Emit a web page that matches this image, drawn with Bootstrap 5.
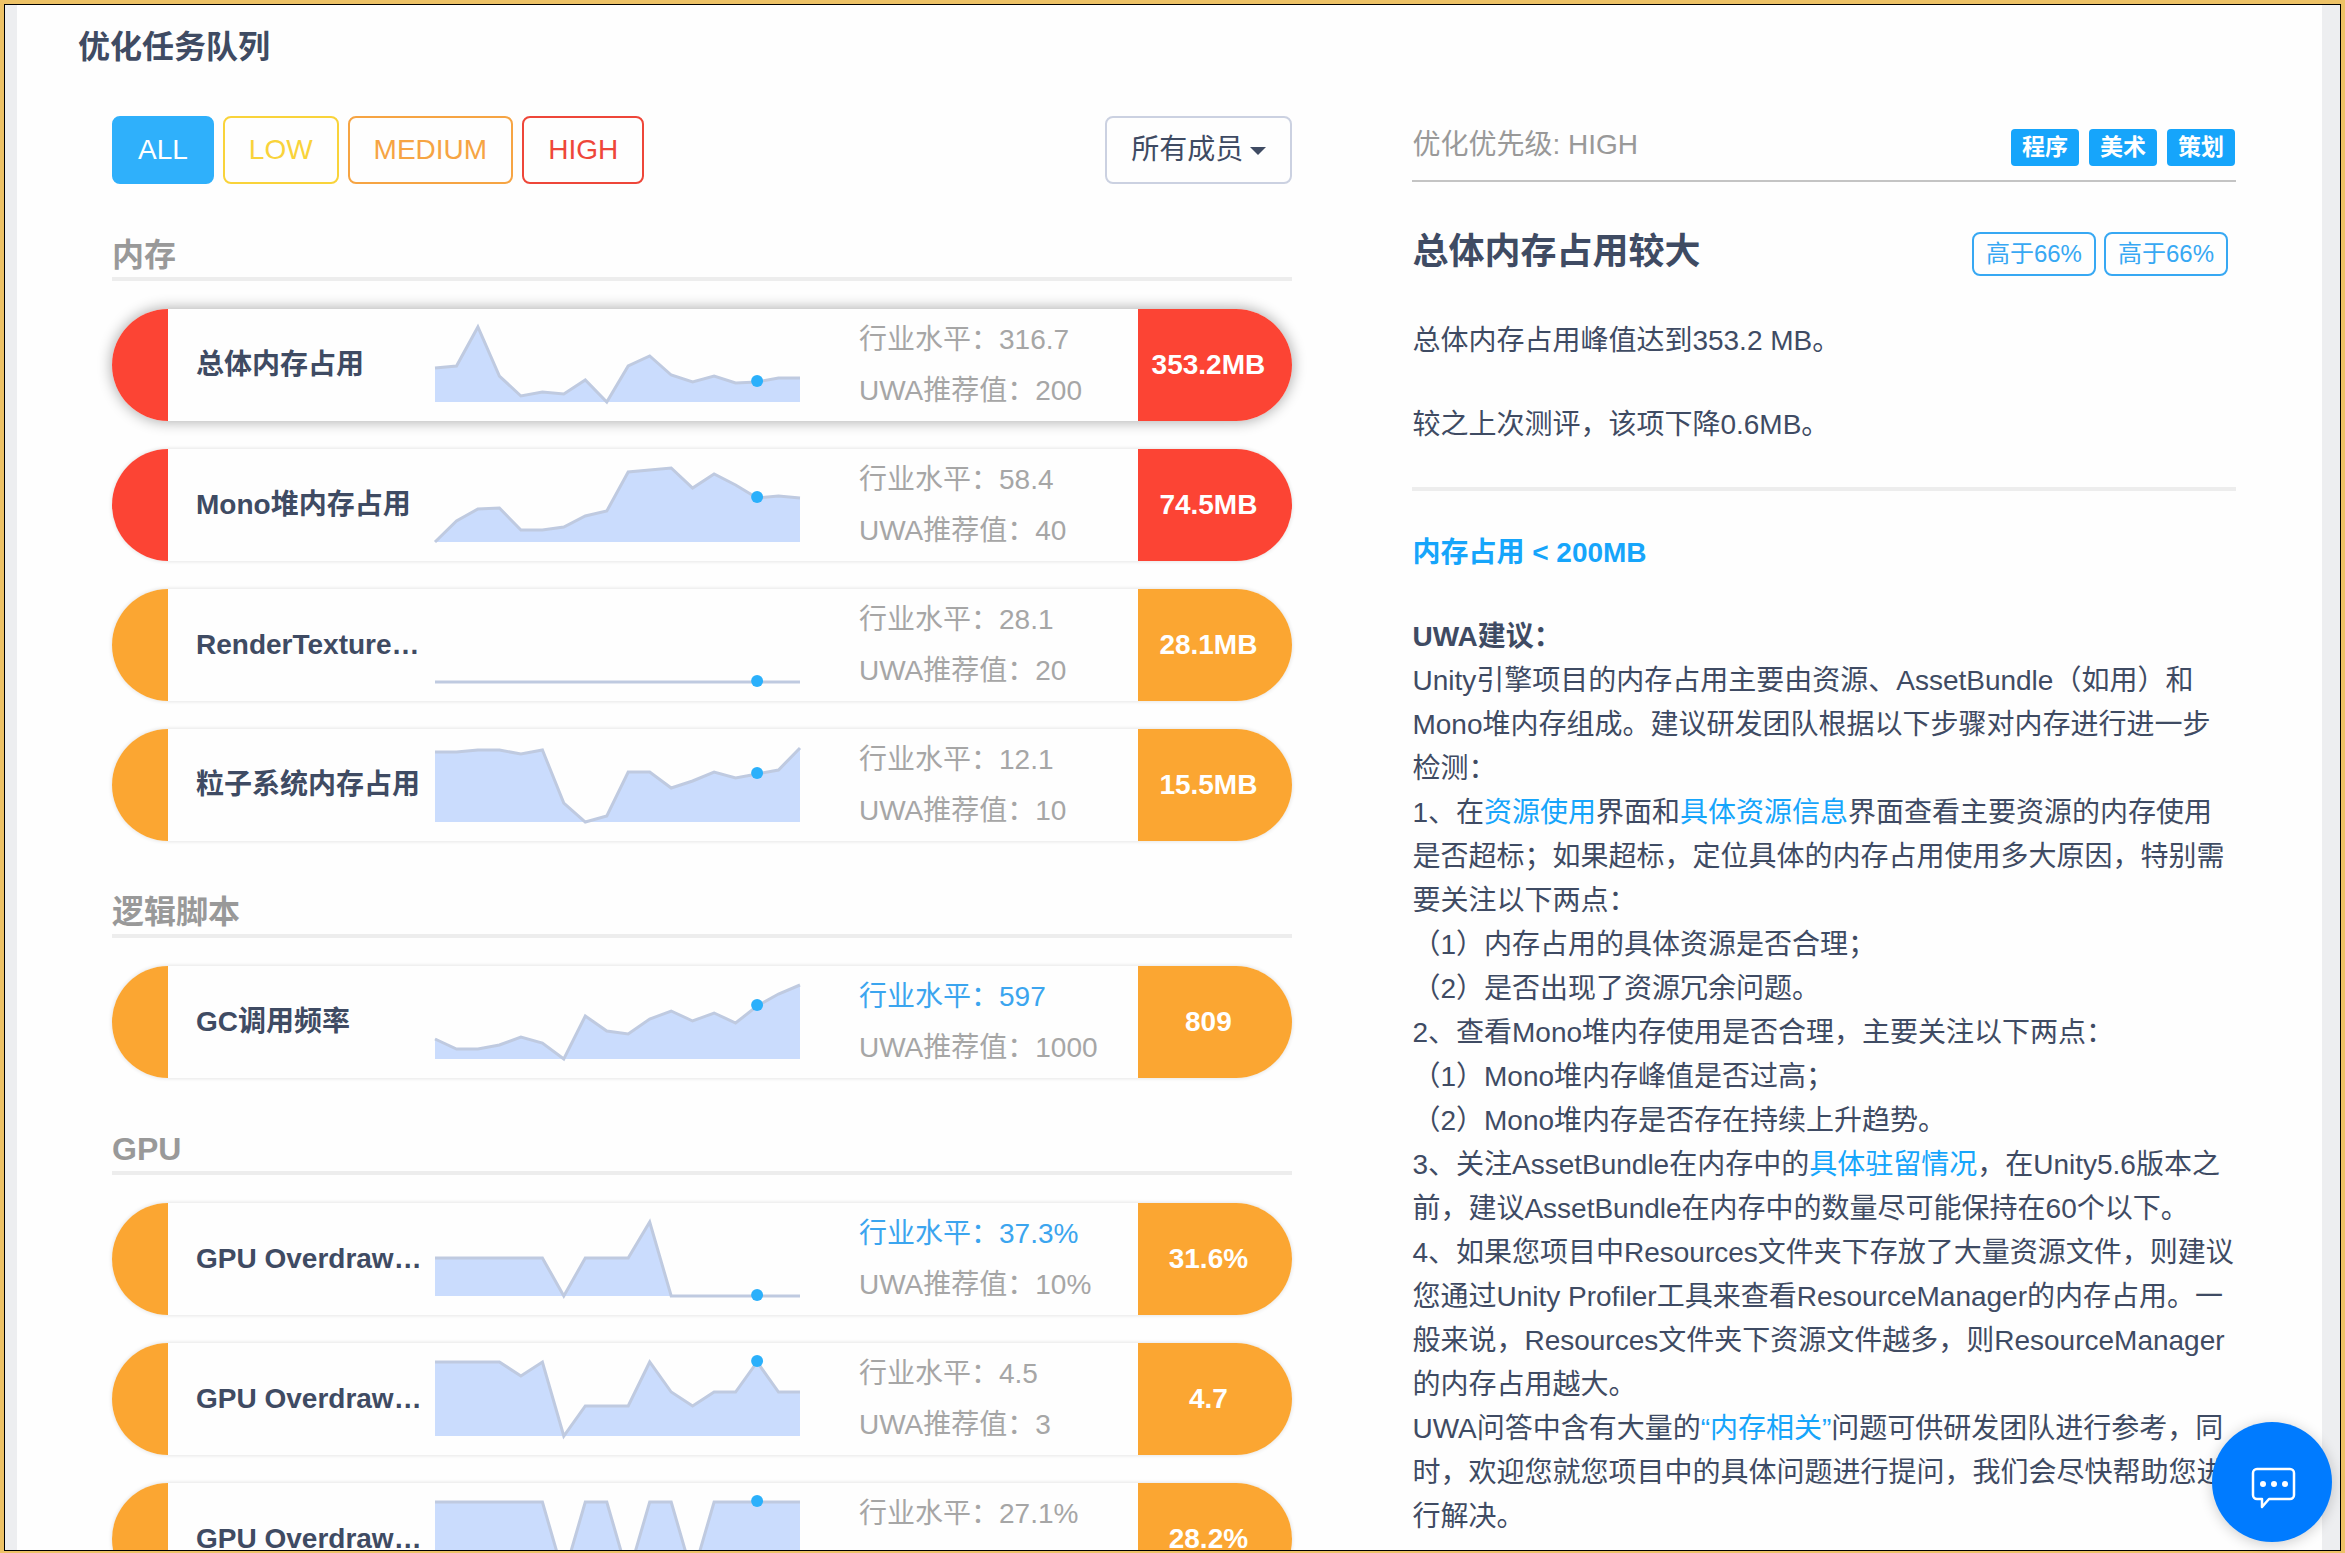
<!DOCTYPE html>
<html lang="zh-CN">
<head>
<meta charset="utf-8">
<meta name="viewport" content="width=device-width, initial-scale=1">
<title>优化任务队列</title>
<link href="https://cdn.jsdelivr.net/npm/bootstrap@5.3.0/dist/css/bootstrap.min.css" rel="stylesheet">
<style>
:root{--ink:#3f4b63;--blue:#16a5fb;--red:#fc4434;--orange:#fba632;--muted:#a6a6a6;--rule:#ededed}
body{font-family:"Liberation Sans","Noto Sans CJK SC",sans-serif;font-size:28px;line-height:44px;color:var(--ink);background:#edc266;text-spacing-trim:space-all}
a{color:var(--blue);text-decoration:none}
.frame{height:100vh;overflow:hidden;border:solid #edc266;border-width:4px 4px 2px}
.desk{height:100%;border:1px solid #000;background:#edeef0;padding:0 18px 0 12px;overflow:hidden}
.sheet{background:#fefefe;min-height:100%;padding:18px 86px 0 95px}
.page-title{font-size:32px;line-height:48px;font-weight:700;margin:0 0 45px -34px}
.columns{gap:120px}
.queue{flex:1181 1 0;min-width:0}
.detail{flex:824 1 0;min-width:0}
.btn-filter{--bs-btn-font-size:28px;--bs-btn-line-height:42px;--bs-btn-padding-x:24px;--bs-btn-padding-y:11px;--bs-btn-border-width:2px;--bs-btn-border-radius:8px;--bs-btn-color:var(--tone);--bs-btn-border-color:var(--tone);--bs-btn-hover-color:var(--tone);--bs-btn-hover-border-color:var(--tone)}
.filters{gap:9px}
.tone-all{--tone:#2fb0fb;--bs-btn-color:#fff;--bs-btn-bg:var(--tone)}
.tone-low{--tone:#f9d33a}
.tone-medium{--tone:#f6a443}
.tone-high{--tone:#ee4639}
.members{--tone:#cbd1e1;--bs-btn-color:var(--ink)}
.members::after{vertical-align:4px}
.group-title{font-size:32px;line-height:36px;font-weight:700;color:#999;border-bottom:4px solid var(--rule);padding-bottom:4px;margin:53px 0 28px}
.tasks{gap:28px}
.task{height:112px;border-radius:56px;overflow:hidden;background:#fefefe;color:var(--ink);box-shadow:0 0 4px rgba(0,0,0,.14)}
.task.active{box-shadow:0 0 14px 1px rgba(0,0,0,.32)}
.cap{width:56px;background:var(--level)}
.lvl-high{--level:var(--red)}
.lvl-medium{--level:var(--orange)}
.task-name{width:239px;margin-left:28px;font-weight:700}
.spark{width:365px;height:112px;overflow:visible}
.spark polygon{fill:#cadcfd}
.spark polyline{fill:none;stroke:#bfcae0;stroke-width:3}
.spark circle{fill:#2bb0fb}
.levels{margin-left:59px;line-height:51px;color:var(--muted)}
.levels .better{color:#3ba5ef}
.score{width:154px;padding-right:14px;background:var(--level);color:#fff;font-weight:700}
.detail-head{height:66px;padding-bottom:14px;border-bottom:2px solid #c4c4c4;color:#999;line-height:42px}
.role-tags{gap:10px;padding-right:1px}
.role-tag{--bs-badge-font-size:23px;--bs-badge-padding-x:11px;--bs-badge-padding-y:7px;--bs-badge-border-radius:4px;line-height:23px;background:var(--blue)}
.detail-title{font-size:36px;line-height:44px;font-weight:700}
.title-row{margin:48px 0 43px}
.rank-tags{gap:8px;padding:2px 8px 0 0}
.rank-tag{font-size:24px;line-height:40px;border:2px solid #37a8f3;border-radius:8px;color:#37a8f3;padding:0 12px}
.detail p{margin-bottom:40px}
.rule{height:4px;margin:0 0 40px;border:0;background:var(--rule);opacity:1}
.target{color:var(--blue);font-weight:700}
.chat{position:fixed;right:13px;bottom:11px;width:120px;height:120px;border:0;background:#007bff;box-shadow:0 2px 14px rgba(0,0,0,.2)}
</style>
<script src="https://cdn.jsdelivr.net/npm/bootstrap@5.3.0/dist/js/bootstrap.bundle.min.js"></script>
</head>
<body>
<div class="frame"><div class="desk"><main class="sheet">
<h1 class="page-title">优化任务队列</h1>
<div class="columns d-flex align-items-start">
<section class="queue">
  <div class="d-flex justify-content-between">
    <div class="filters d-flex">
      <button type="button" class="btn btn-filter tone-all">ALL</button>
      <button type="button" class="btn btn-filter tone-low">LOW</button>
      <button type="button" class="btn btn-filter tone-medium">MEDIUM</button>
      <button type="button" class="btn btn-filter tone-high">HIGH</button>
    </div>
    <button type="button" class="btn btn-filter members dropdown-toggle" aria-haspopup="true">所有成员</button>
  </div>

  <h2 class="group-title">内存</h2>
  <div class="tasks d-flex flex-column">
    <a href="#" class="task active lvl-high d-flex align-items-stretch"><span class="cap"></span><span class="task-name align-self-center text-truncate">总体内存占用</span><svg class="spark" data-points="59 57 18 67 87 83 85 71 93 57 47 66 73 67 74 73 69 69"></svg><span class="levels align-self-center"><span class="d-block">行业水平：316.7</span><span class="d-block">UWA推荐值：200</span></span><span class="score ms-auto d-flex align-items-center justify-content-center">353.2MB</span></a>
    <a href="#" class="task lvl-high d-flex align-items-stretch"><span class="cap"></span><span class="task-name align-self-center text-truncate">Mono堆内存占用</span><svg class="spark" data-points="93 72 60 59 81 81 78 67 62 23 21 19 39 25 36 49 47 49"></svg><span class="levels align-self-center"><span class="d-block">行业水平：58.4</span><span class="d-block">UWA推荐值：40</span></span><span class="score ms-auto d-flex align-items-center justify-content-center">74.5MB</span></a>
    <a href="#" class="task lvl-medium d-flex align-items-stretch"><span class="cap"></span><span class="task-name align-self-center text-truncate">RenderTexture…</span><svg class="spark" data-points="93 93 93 93 93 93 93 93 93 93 93 93 93 93 93 93 93 93"></svg><span class="levels align-self-center"><span class="d-block">行业水平：28.1</span><span class="d-block">UWA推荐值：20</span></span><span class="score ms-auto d-flex align-items-center justify-content-center">28.1MB</span></a>
    <a href="#" class="task lvl-medium d-flex align-items-stretch"><span class="cap"></span><span class="task-name align-self-center text-truncate">粒子系统内存占用</span><svg class="spark" data-points="23 23 21 21 25 21 74 93 87 43 43 59 52 43 49 45 41 19"></svg><span class="levels align-self-center"><span class="d-block">行业水平：12.1</span><span class="d-block">UWA推荐值：10</span></span><span class="score ms-auto d-flex align-items-center justify-content-center">15.5MB</span></a>
  </div>

  <h2 class="group-title">逻辑脚本</h2>
  <div class="tasks d-flex flex-column">
    <a href="#" class="task lvl-medium d-flex align-items-stretch"><span class="cap"></span><span class="task-name align-self-center text-truncate">GC调用频率</span><svg class="spark" data-points="73 83 83 79 71 77 93 50 65 68 53 45 55 47 57 40 28 19"></svg><span class="levels align-self-center"><span class="d-block better">行业水平：597</span><span class="d-block">UWA推荐值：1000</span></span><span class="score ms-auto d-flex align-items-center justify-content-center">809</span></a>
  </div>

  <h2 class="group-title">GPU</h2>
  <div class="tasks d-flex flex-column">
    <a href="#" class="task lvl-medium d-flex align-items-stretch"><span class="cap"></span><span class="task-name align-self-center text-truncate">GPU Overdraw…</span><svg class="spark" data-points="55 55 55 55 55 55 93 55 55 55 19 93 93 93 93 93 93 93"></svg><span class="levels align-self-center"><span class="d-block better">行业水平：37.3%</span><span class="d-block">UWA推荐值：10%</span></span><span class="score ms-auto d-flex align-items-center justify-content-center">31.6%</span></a>
    <a href="#" class="task lvl-medium d-flex align-items-stretch"><span class="cap"></span><span class="task-name align-self-center text-truncate">GPU Overdraw…</span><svg class="spark" data-points="19 19 19 19 33 19 93 63 63 63 19 49 63 49 49 19 49 49"></svg><span class="levels align-self-center"><span class="d-block">行业水平：4.5</span><span class="d-block">UWA推荐值：3</span></span><span class="score ms-auto d-flex align-items-center justify-content-center">4.7</span></a>
    <a href="#" class="task lvl-medium d-flex align-items-stretch"><span class="cap"></span><span class="task-name align-self-center text-truncate">GPU Overdraw…</span><svg class="spark" data-points="19 19 19 19 19 19 93 19 19 93 19 19 93 19 19 19 19 19"></svg><span class="levels align-self-center"><span class="d-block">行业水平：27.1%</span><span class="d-block">&nbsp;</span></span><span class="score ms-auto d-flex align-items-center justify-content-center">28.2%</span></a>
  </div>
</section>

<section class="detail">
  <div class="detail-head d-flex justify-content-between align-items-end">
    <span>优化优先级: HIGH</span>
    <div class="role-tags d-flex"><span class="badge role-tag">程序</span><span class="badge role-tag">美术</span><span class="badge role-tag">策划</span></div>
  </div>
  <div class="title-row d-flex justify-content-between align-items-start">
    <h2 class="detail-title m-0">总体内存占用较大</h2>
    <div class="rank-tags d-flex"><span class="rank-tag">高于66%</span><span class="rank-tag">高于66%</span></div>
  </div>
  <p>总体内存占用峰值达到353.2 MB。</p>
  <p>较之上次测评，该项下降0.6MB。</p>
  <hr class="rule">
  <p class="target">内存占用 &lt; 200MB</p>
  <div class="advice">
    <div class="fw-bold">UWA建议：</div>
    <div>Unity引擎项目的内存占用主要由资源、AssetBundle（如用）和Mono堆内存组成。建议研发团队根据以下步骤对内存进行进一步检测：</div>
    <div>1、在<a href="#">资源使用</a>界面和<a href="#">具体资源信息</a>界面查看主要资源的内存使用是否超标；如果超标，定位具体的内存占用使用多大原因，特别需要关注以下两点：</div>
    <div>（1）内存占用的具体资源是否合理；</div>
    <div>（2）是否出现了资源冗余问题。</div>
    <div>2、查看Mono堆内存使用是否合理，主要关注以下两点：</div>
    <div>（1）Mono堆内存峰值是否过高；</div>
    <div>（2）Mono堆内存是否存在持续上升趋势。</div>
    <div>3、关注AssetBundle在内存中的<a href="#">具体驻留情况</a>，在Unity5.6版本之前，建议AssetBundle在内存中的数量尽可能保持在60个以下。</div>
    <div>4、如果您项目中Resources文件夹下存放了大量资源文件，则建议您通过Unity Profiler工具来查看ResourceManager的内存占用。一般来说，Resources文件夹下资源文件越多，则ResourceManager的内存占用越大。</div>
    <div>UWA问答中含有大量的<a href="#">“内存相关”</a>问题可供研发团队进行参考，同时，欢迎您就您项目中的具体问题进行提问，我们会尽快帮助您进行解决。</div>
  </div>
</section>
</div>
</main></div></div>

<button type="button" class="chat rounded-circle d-flex align-items-center justify-content-center p-0" aria-label="chat">
  <svg width="48" height="48" viewBox="-2 -4 48 48" overflow="visible" fill="none" stroke="#fff" stroke-width="2.5" stroke-linejoin="round"><path d="M7 7h33a4 4 0 0 1 4 4v22a4 4 0 0 1-4 4H19l-7 8v-8H7a4 4 0 0 1-4-4V11a4 4 0 0 1 4-4z"/><g fill="#fff" stroke="none"><circle cx="13" cy="22" r="3"/><circle cx="24" cy="22" r="3"/><circle cx="35" cy="22" r="3"/></g></svg>
</button>

<script>
// Draw each sparkline from its list of heights; the marker sits on the third point from the end.
document.querySelectorAll('.spark').forEach(function (svg) {
  var ys = svg.dataset.points.split(' ').map(Number), step = 365 / (ys.length - 1);
  var line = ys.map(function (y, i) { return (i * step).toFixed(1) + ',' + y; }).join(' ');
  var mark = ys.length - 3;
  svg.setAttribute('viewBox', '0 0 365 112');
  svg.innerHTML = '<polygon points="0,93 ' + line + ' 365,93"/><polyline points="' + line + '"/><circle cx="' + (mark * step).toFixed(1) + '" cy="' + (ys[mark] - 1) + '" r="6"/>';
});
</script>
</body>
</html>
